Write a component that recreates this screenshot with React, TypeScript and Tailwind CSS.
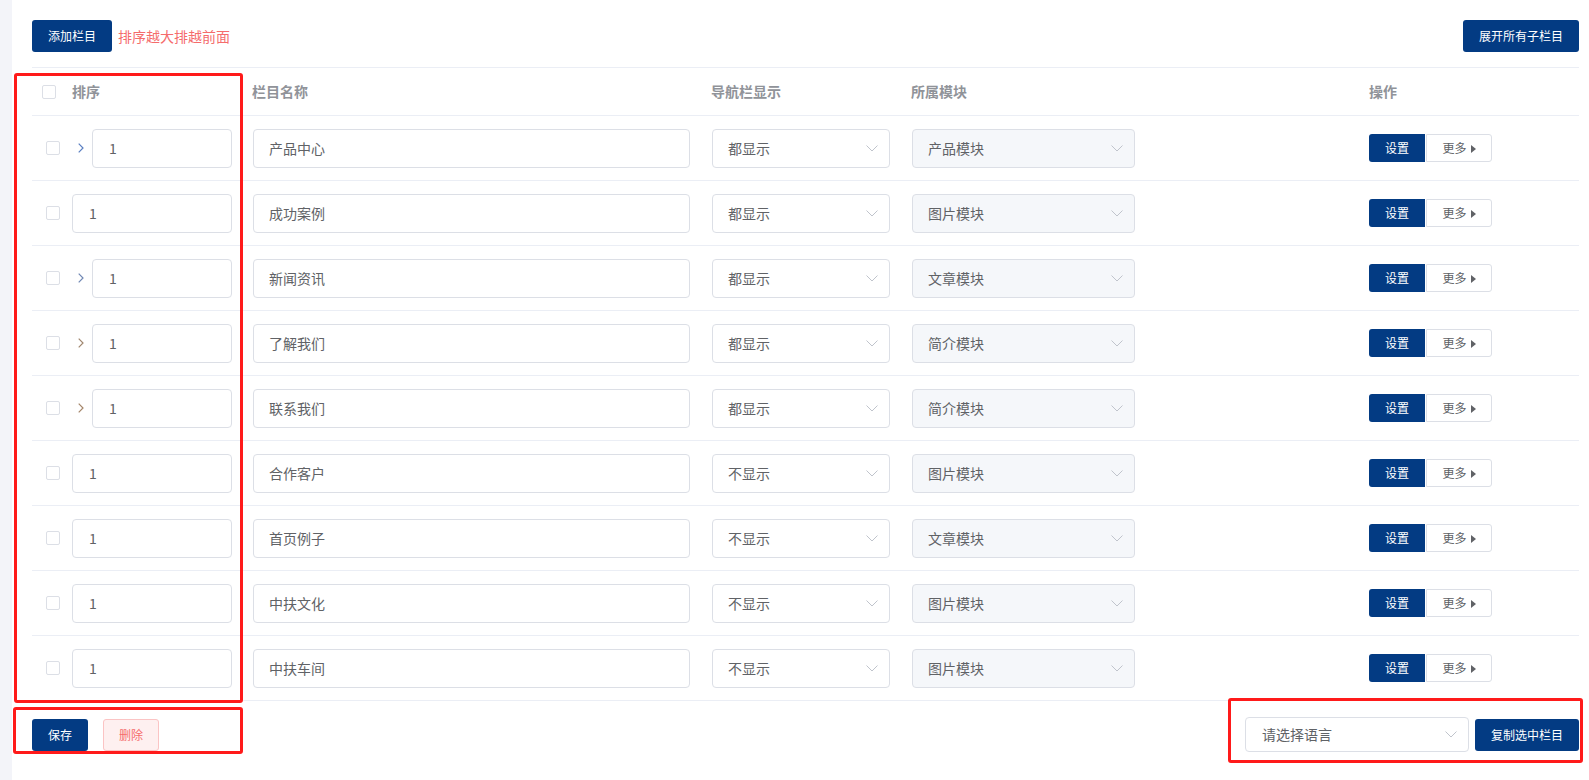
interface Row {
  sort: string;
  name: string;
  nav: string;
  module: string;
  arrow?: string;
}

const rows: Row[] = [
  { sort: '1', name: '产品中心', nav: '都显示', module: '产品模块', arrow: '#5a7fc2' },
  { sort: '1', name: '成功案例', nav: '都显示', module: '图片模块' },
  { sort: '1', name: '新闻资讯', nav: '都显示', module: '文章模块', arrow: '#7088b4' },
  { sort: '1', name: '了解我们', nav: '都显示', module: '简介模块', arrow: '#a0876f' },
  { sort: '1', name: '联系我们', nav: '都显示', module: '简介模块', arrow: '#a5866a' },
  { sort: '1', name: '合作客户', nav: '不显示', module: '图片模块' },
  { sort: '1', name: '首页例子', nav: '不显示', module: '文章模块' },
  { sort: '1', name: '中扶文化', nav: '不显示', module: '图片模块' },
  { sort: '1', name: '中扶车间', nav: '不显示', module: '图片模块' },
];

function Checkbox() {
  return <span className="block w-[14px] h-[14px] shrink-0 rounded-[2px] border border-[#dcdfe6] bg-white" />;
}

function DownArrow() {
  return (
    <svg width="12" height="7" viewBox="0 0 12 7" fill="none">
      <path d="M0.5 0.5 L6 6 L11.5 0.5" stroke="#c0c4cc" strokeWidth="1" />
    </svg>
  );
}

function Select({ value, width, disabled }: { value: string; width: string; disabled?: boolean }) {
  return (
    <div
      className={`${width} h-[39px] shrink-0 flex items-center justify-between pl-[15px] pr-[11px] rounded-[4px] border border-[#dcdfe6] text-[14px] text-[#606266] ${
        disabled ? 'bg-[#f5f7fa]' : 'bg-white'
      }`}
    >
      <span>{value}</span>
      <DownArrow />
    </div>
  );
}

export default function App() {
  return (
    <div
      className="relative flex min-h-screen bg-white"
      style={{ fontFamily: '"Noto Sans CJK SC", "Noto Sans", sans-serif' }}
    >
      <div className="w-[12px] shrink-0 bg-[#f3f4f9]" />

      <div className="flex-1 pl-[20px] pr-[10px] pt-[20px]">
        {/* top toolbar */}
        <div className="flex items-center h-[32px]">
          <button className="h-[32px] w-[80px] rounded-[3px] bg-[#033b83] text-white text-[12px]">添加栏目</button>
          <span className="ml-[6px] text-[14px] text-[#f56c6c]">排序越大排越前面</span>
          <button className="ml-auto h-[32px] w-[116px] rounded-[3px] bg-[#033b83] text-white text-[12px]">
            展开所有子栏目
          </button>
        </div>

        {/* table */}
        <div className="mt-[15px] border-t border-[#ebeef5]">
          <div className="flex items-center h-[48px] border-b border-[#ebeef5] text-[14px] font-bold text-[#909399]">
            <span className="ml-[10px]">
              <Checkbox />
            </span>
            <span className="ml-[16px] w-[180px]">排序</span>
            <span className="w-[459px]">栏目名称</span>
            <span className="w-[200px]">导航栏显示</span>
            <span className="w-[458px]">所属模块</span>
            <span>操作</span>
          </div>

          {rows.map((row) => (
            <div key={row.name} className="flex items-center h-[65px] border-b border-[#ebeef5]">
              <span className="ml-[14px]">
                <Checkbox />
              </span>
              {row.arrow ? (
                <>
                  <svg width="6" height="10" viewBox="0 0 6 10" fill="none" className="ml-[18px]">
                    <path d="M0.7 0.7 L5 5 L0.7 9.3" stroke={row.arrow} strokeWidth="1.2" />
                  </svg>
                  <div className="ml-[8px] w-[140px] h-[39px] flex items-center pl-[16px] rounded-[4px] border border-[#dcdfe6] text-[14px] text-[#606266]">
                    {row.sort}
                  </div>
                </>
              ) : (
                <div className="ml-[12px] w-[160px] h-[39px] flex items-center pl-[16px] rounded-[4px] border border-[#dcdfe6] text-[14px] text-[#606266]">
                  {row.sort}
                </div>
              )}
              <div className="ml-[21px] w-[437px] h-[39px] flex items-center pl-[15px] rounded-[4px] border border-[#dcdfe6] text-[14px] text-[#606266]">
                {row.name}
              </div>
              <div className="ml-[22px]">
                <Select value={row.nav} width="w-[178px]" />
              </div>
              <div className="ml-[22px]">
                <Select value={row.module} width="w-[223px]" disabled />
              </div>
              <div className="ml-[234px] flex items-center">
                <button className="h-[28px] w-[56px] rounded-l-[3px] bg-[#033b83] text-white text-[12px]">设置</button>
                <button className="ml-[1px] h-[28px] w-[66px] flex items-center justify-center gap-[4px] rounded-r-[3px] border border-[#dcdfe6] bg-white text-[12px] text-[#606266]">
                  更多
                  <svg width="5" height="8" viewBox="0 0 5 8" className="mt-[1px]">
                    <path d="M0 0 L5 4 L0 8 Z" fill="#606266" />
                  </svg>
                </button>
              </div>
            </div>
          ))}
        </div>

        {/* bottom bar */}
        <div className="flex items-center mt-[16px]">
          <button className="h-[32px] w-[56px] rounded-[3px] bg-[#033b83] text-white text-[12px]">保存</button>
          <button className="ml-[15px] h-[32px] w-[56px] rounded-[3px] border border-[#fbc4c4] bg-[#fef0f0] text-[12px] text-[#f56c6c]">
            删除
          </button>
          <div className="ml-auto flex items-center">
            <div className="w-[224px] h-[35px] flex items-center justify-between pl-[16px] pr-[11px] rounded-[4px] border border-[#dcdfe6] text-[14px] text-[#606266]">
              <span>请选择语言</span>
              <DownArrow />
            </div>
            <button className="ml-[6px] h-[32px] w-[104px] rounded-[3px] bg-[#033b83] text-white text-[12px]">
              复制选中栏目
            </button>
          </div>
        </div>
      </div>

      {/* red annotation boxes */}
      <div className="absolute left-[14px] top-[73px] w-[229px] h-[630px] border-[3px] border-[#ff1a1a] rounded-[3px] pointer-events-none" />
      <div className="absolute left-[13px] top-[707px] w-[230px] h-[47px] border-[3px] border-[#ff1a1a] rounded-[3px] pointer-events-none" />
      <div className="absolute left-[1228px] top-[698px] w-[355px] h-[65px] border-[3px] border-[#ff1a1a] rounded-[3px] pointer-events-none" />
    </div>
  );
}
